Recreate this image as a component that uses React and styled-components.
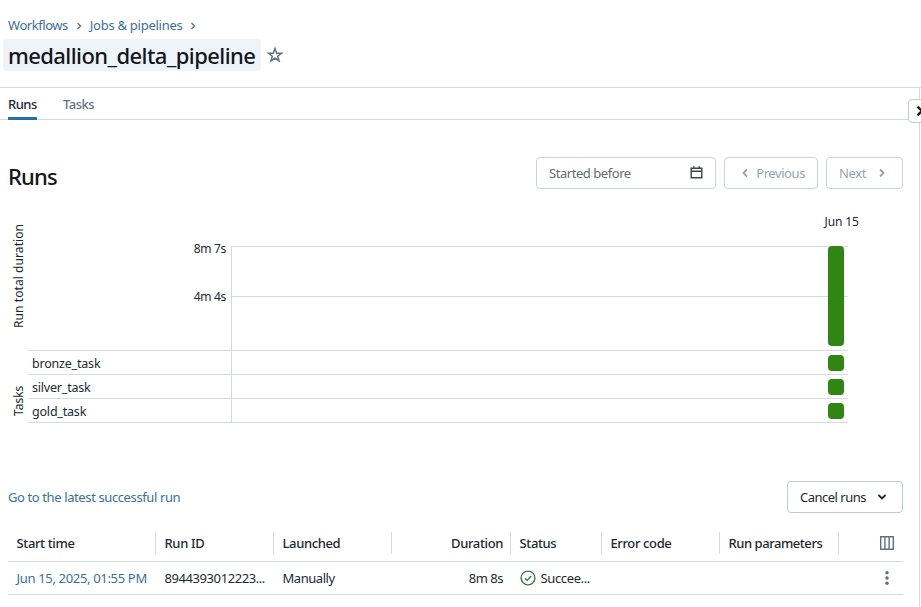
import React from "react";
import styled, { createGlobalStyle } from "styled-components";

const Global = createGlobalStyle`
  * { box-sizing: border-box; }
  body { margin: 0; background: #fff; overflow: hidden; }
`;

const line = "#d3dae0";
const blue = "#39709f";
const ink = "#1b2a33";

const Page = styled.div`
  width: 921px; height: 607px; overflow: hidden; position: relative;
  display: flex; flex-direction: column; background: #fff; color: ${ink};
  font: 400 13px/20px "Noto Sans", "Open Sans", sans-serif;
`;
const Label = styled.span`
  display: inline-block; white-space: nowrap;
  letter-spacing: ${(p) => p.$ls ?? -0.37}px;
`;
const Header = styled.header`
  height: 88px; padding-top: 15px; border-bottom: 1px solid ${line};
`;
const Crumbs = styled.nav`
  display: flex; align-items: center; height: 20px; padding-left: 8px; color: ${blue};
  svg { color: #5f7281; margin: 2px 6px 0 6px; }
`;
const TitleRow = styled.div`
  display: flex; align-items: center; margin: 4px 0 0 3px; height: 32px; gap: 5px; color: #5f7281;
`;
const Title = styled.h1`
  margin: 0; width: 258px; height: 32px; padding-left: 5px; border-radius: 4px; background: #eff3fa;
  color: #11171c; font-size: 22px; line-height: 33px; font-weight: 500;
`;
const Body = styled.div`
  flex: 1; width: 920px; border-right: 1px solid ${line};
`;
const Tabs = styled.div`
  display: flex; gap: 26px; height: 32px; padding-left: 8px; border-bottom: 1px solid ${line};
`;
const Tab = styled.div`
  height: 32px; width: ${(p) => p.$w}px; line-height: 33px; font-weight: 500;
  color: ${(p) => (p.$active ? ink : "#66737d")};
  border-bottom: 3px solid ${(p) => (p.$active ? "#2272a4" : "transparent")};
`;
const Collapse = styled.button`
  position: absolute; left: 908px; top: 99px; width: 24px; height: 24px; padding: 0 0 0 1px;
  display: flex; align-items: center; border: 1px solid #c2ccd5; border-radius: 4px;
  background: #fff; color: #11171c;
`;
const Toolbar = styled.div`
  display: flex; align-items: center; gap: 8px; margin: 37px 16px 0 8px; height: 32px;
`;
const Heading = styled.h2`
  margin: 6px auto 0 0; font-size: 22px; line-height: 32px; font-weight: 500; color: #11171c;
`;
const Control = styled.button`
  height: 32px; width: ${(p) => p.$w}px; padding: 0 12px; display: flex; align-items: center;
  justify-content: space-between; border: 1px solid ${(p) => p.$border ?? "#cbd4dc"}; border-radius: 4px;
  background: #fff; color: ${(p) => p.$color}; font: inherit;
`;
const Chart = styled.section`
  display: grid; grid-template-columns: 20px 203px 617px; grid-template-rows: 57px 104px 73px;
  margin: 0 0 0 8px;
`;
const DateCell = styled.div`
  grid-column: 3; padding: 23px 0 0 593.5px; font-size: 12px;
`;
const Vertical = styled.div`
  grid-column: 1; writing-mode: vertical-rl; transform: rotate(180deg); font-size: 12px; line-height: 20px;
  margin-left: 1px; margin-right: -1px;
  display: flex; align-items: center; justify-content: ${(p) => p.$justify};
  padding: ${(p) => p.$pad};
`;
const Ticks = styled.div`
  display: flex; flex-direction: column; gap: 28px; align-items: flex-end;
  padding-right: 5px; margin-top: -7px; font-size: 12px;
`;
const Plot = styled.div`
  border-left: 1px solid ${line}; border-top: 1px solid ${line};
  display: grid; grid-template-rows: 50px 54px; grid-template-columns: 596px 16px 4px;
`;
const PlotLine = styled.div`
  grid-area: 1 / 1 / 2 / 4; border-bottom: 1px solid ${line};
`;
const RunBar = styled.div`
  grid-area: 1 / 2 / 3 / 3; height: 100px; margin-top: -1px; border-radius: 4px; background: #308613;
`;
const TaskList = styled.div`
  grid-column: 2 / 4; border-bottom: 1px solid ${line};
`;
const TaskRow = styled.div`
  display: grid; grid-template-columns: 203px 617px; grid-template-rows: 23px;
  height: 24px; border-top: 1px solid ${line};
`;
const TaskName = styled.div`
  padding-left: 4px; line-height: 25px; font-size: 12.5px;
`;
const TaskTrack = styled.div`
  border-left: 1px solid ${line}; padding: 4px 0 0 596px;
`;
const TaskMark = styled.div`
  width: 16px; height: 16px; border-radius: 4px; background: #308613;
`;
const Actions = styled.div`
  display: flex; align-items: center; justify-content: space-between; height: 32px;
  margin: 58px 16px 0 8px; color: ${blue};
`;
const Table = styled.div`margin: 11px 16px 0 8px;`;
const Row = styled.div`
  display: grid; grid-template-columns: 148px 118px 118px 119px 91px 118px 119px 64px; align-items: center;
  height: ${(p) => p.$h}px; border-bottom: 1px solid ${line};
`;
const HeadCell = styled.div`
  height: 22px; line-height: 23px; padding: 0 7px 0 8.5px; font-weight: 500; white-space: nowrap;
  text-align: ${(p) => p.$align ?? "left"}; border-right: 1px solid ${line};
`;
const Cell = styled.div`
  display: flex; align-items: center; gap: 5px; padding: 0 8px 0 8.5px; white-space: nowrap;
  justify-content: ${(p) => p.$justify ?? "flex-start"}; color: ${(p) => p.$color ?? ink};
`;
const IconCell = styled.div`
  display: flex; justify-content: flex-end; padding-right: 8px; color: #5f7281;
`;

const Chevron = ({ size = 16, turn = 0, weight = 1.5 }) => (
  <svg width={size} height={size} viewBox="0 0 16 16" fill="none" stroke="currentColor" strokeWidth={weight}>
    <path d="M6 4.5 9.5 8 6 11.5" transform={`rotate(${turn} 8 8)`} />
  </svg>
);
const CrumbChevron = () => (
  <svg width="10" height="10" viewBox="0 0 10 10" fill="none" stroke="currentColor" strokeWidth="1.4">
    <path d="M3.5 2 6.5 5 3.5 8" />
  </svg>
);
const Star = () => (
  <svg width="18" height="18" viewBox="0 0 16 16" fill="none" stroke="currentColor" strokeWidth="1.3">
    <path d="m8 2.2 1.5 4.2h4.3l-3.4 2.7 1.25 4.2L8 10.8l-3.65 2.5L5.6 9.1 2.2 6.4h4.3z" />
  </svg>
);
const Calendar = () => (
  <svg width="13" height="14" viewBox="0 0 13 14" fill="none" stroke="#3b4750" strokeWidth="1.4">
    <path d="M1.2 2.2h10.6v9.6H1.2zM1.2 5.3h10.6M3.8.2v2M9.2.2v2" />
  </svg>
);
const Check = () => (
  <svg width="16" height="16" viewBox="0 0 16 16" fill="none" stroke="#3a7a45" strokeWidth="1.4">
    <circle cx="8" cy="8" r="6.9" /><path d="m4.9 8.3 2.2 2.1 4-4.4" />
  </svg>
);
const Columns = () => (
  <svg width="16" height="16" viewBox="0 0 16 16" fill="none" stroke="currentColor" strokeWidth="1.4">
    <path d="M1.7 1.7h12.6v12.6H1.7zM5.9 1.7v12.6M10.1 1.7v12.6" />
  </svg>
);
const Dots = () => (
  <svg width="16" height="16" viewBox="0 0 16 16" fill="currentColor">
    <circle cx="8" cy="2.8" r="1.75" /><circle cx="8" cy="8" r="1.75" /><circle cx="8" cy="13.2" r="1.75" />
  </svg>
);

const tasks = ["bronze_task", "silver_task", "gold_task"];

export default function App() {
  return (
    <Page>
      <Global />
      <Header>
        <Crumbs>
          <Label $ls={-0.45}>Workflows</Label><CrumbChevron />
          <Label $ls={-0.27}>Jobs &amp; pipelines</Label><CrumbChevron />
        </Crumbs>
        <TitleRow><Title><Label $ls={-0.58}>medallion_delta_pipeline</Label></Title><Star /></TitleRow>
      </Header>
      <Body>
        <Tabs>
          <Tab $active $w={29}><Label $ls={-0.5}>Runs</Label></Tab>
          <Tab $w={31}><Label $ls={-0.5}>Tasks</Label></Tab>
        </Tabs>
        <Toolbar>
          <Heading><Label $ls={-0.8}>Runs</Label></Heading>
          <Control $w={180} $color="#5f6b75"><Label $ls={-0.45}>Started before</Label><Calendar /></Control>
          <Control $w={94} $color="#92a4b3"><Chevron turn={180} weight={1.8} /><Label $ls={-0.42}>Previous</Label></Control>
          <Control $w={77} $color="#92a4b3"><Label>Next</Label><Chevron weight={1.8} /></Control>
        </Toolbar>
        <Chart>
          <DateCell><Label $ls={-0.1}>Jun 15</Label></DateCell>
          <Vertical $justify="center" $pad="44px 0 0"><Label $ls={0.08}>Run total duration</Label></Vertical>
          <Ticks><Label $ls={-0.3}>8m 7s</Label><Label $ls={-0.3}>4m 4s</Label></Ticks>
          <Plot><PlotLine /><RunBar /></Plot>
          <Vertical $justify="flex-start" $pad="7px 0 0"><Label $ls={0}>Tasks</Label></Vertical>
          <TaskList>
            {tasks.map((t) => (
              <TaskRow key={t}><TaskName><Label $ls={-0.2}>{t}</Label></TaskName><TaskTrack><TaskMark /></TaskTrack></TaskRow>
            ))}
          </TaskList>
        </Chart>
        <Actions>
          <Label $ls={-0.39}>Go to the latest successful run</Label>
          <Control $w={116} $color={ink} $border="#c0c9d6"><Label $ls={-0.5}>Cancel runs</Label><Chevron turn={90} weight={1.8} /></Control>
        </Actions>
        <Table>
          <Row $h={38}>
            <HeadCell><Label>Start time</Label></HeadCell>
            <HeadCell><Label>Run ID</Label></HeadCell>
            <HeadCell><Label>Launched</Label></HeadCell>
            <HeadCell $align="right"><Label>Duration</Label></HeadCell>
            <HeadCell><Label>Status</Label></HeadCell>
            <HeadCell><Label>Error code</Label></HeadCell>
            <HeadCell><Label $ls={-0.45}>Run parameters</Label></HeadCell>
            <IconCell><Columns /></IconCell>
          </Row>
          <Row $h={33}>
            <Cell $color={blue}><Label $ls={-0.33}>Jun 15, 2025, 01:55 PM</Label></Cell>
            <Cell><Label $ls={-0.42}>8944393012223...</Label></Cell>
            <Cell><Label $ls={-0.45}>Manually</Label></Cell>
            <Cell $justify="flex-end"><Label $ls={-0.5}>8m 8s</Label></Cell>
            <Cell><Check /><Label>Succee...</Label></Cell>
            <Cell /><Cell />
            <IconCell><Dots /></IconCell>
          </Row>
        </Table>
      </Body>
      <Collapse><Chevron size={20} weight={1.9} /></Collapse>
    </Page>
  );
}
